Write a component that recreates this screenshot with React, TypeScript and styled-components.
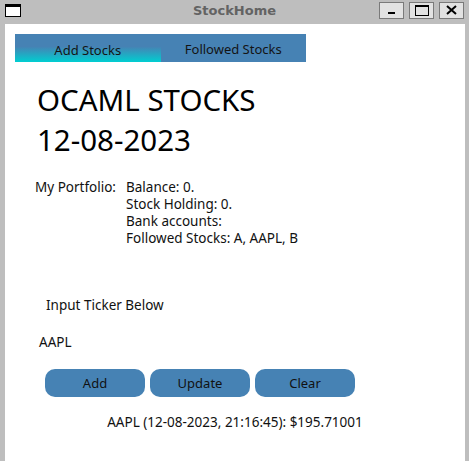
import styled, { createGlobalStyle } from "styled-components";

const Global = createGlobalStyle`
  html, body {
    margin: 0;
    padding: 0;
    background: #bebebe;
  }
  body {
    font-family: "Noto Sans", "DejaVu Sans", sans-serif;
    color: #111;
  }
`;

const Frame = styled.div`
  width: 469px;
  height: 461px;
  background: #bebebe;
  display: flex;
  flex-direction: column;
  overflow: hidden;
`;

const TitleBar = styled.div`
  height: 24px;
  display: flex;
  align-items: center;
  padding: 0 5px;
  box-sizing: border-box;
`;

const AppIcon = styled.div`
  width: 16px;
  height: 13px;
  margin-top: -3px;
  box-sizing: border-box;
  border: 1px solid #000;
  border-top-width: 3px;
  background: #fff;
`;

const WindowTitle = styled.div`
  flex: 1;
  text-align: center;
  font-family: "DejaVu Sans", sans-serif;
  font-weight: bold;
  font-size: 13px;
  color: #636363;
  margin-top: -4px;
  padding-left: 69px;
`;

const Controls = styled.div`
  display: flex;
  gap: 5px;
  margin-top: -4px;
`;

const CtrlButton = styled.div`
  width: 25px;
  height: 17px;
  box-sizing: border-box;
  background: #e2e2e2;
  border: 1px solid #7a7a7a;
  display: flex;
  align-items: center;
  justify-content: center;
`;

const Client = styled.div`
  flex: 1;
  margin: 0 4px 0 5px;
  background: #fff;
  display: flex;
  flex-direction: column;
  padding: 10px 0 0 10px;
`;

const Tabs = styled.div`
  display: flex;
  width: 291px;
  height: 28px;
  background: #4682b4;
`;

const Tab = styled.div<{ $active?: boolean }>`
  flex: 1;
  display: flex;
  align-items: center;
  justify-content: center;
  font-size: 13px;
  color: #141414;
  padding-top: ${(p) => (p.$active ? "3px" : "1px")};
  box-sizing: border-box;
  background: ${(p) =>
    p.$active
      ? "linear-gradient(to bottom, #4682b4 0%, #4682b4 45%, #00ced1 100%)"
      : "#4682b4"};
`;

const Heading = styled.div`
  margin: 18px 0 0 22px;
  font-size: 29.5px;
  line-height: 40px;
  color: #000;
`;

const Portfolio = styled.div`
  display: flex;
  margin: 19px 0 0 20px;
  font-size: 13.5px;
  line-height: 17px;
`;

const PortLabel = styled.div`
  width: 91px;
`;

const PortLines = styled.div`
  display: flex;
  flex-direction: column;
  span {
    line-height: 17px;
  }
`;

const Prompt = styled.div`
  margin: 50px 0 0 31px;
  font-size: 13.5px;
  line-height: 17px;
`;

const Ticker = styled.div`
  margin: 20px 0 0 24px;
  font-size: 13.5px;
  line-height: 17px;
`;

const ButtonRow = styled.div`
  display: flex;
  gap: 5px;
  margin: 18px 0 0 30px;
`;

const Button = styled.button`
  width: 100px;
  height: 28px;
  border: none;
  border-radius: 10px;
  background: #4682b4;
  color: #111;
  font-family: "Noto Sans", sans-serif;
  font-size: 13px;
  padding: 0;
`;

const Result = styled.div`
  margin: 17px 0 0 -10px;
  text-align: center;
  font-size: 13.5px;
  line-height: 17px;
`;

export default function App() {
  return (
    <Frame>
      <Global />
      <TitleBar>
        <AppIcon />
        <WindowTitle>StockHome</WindowTitle>
        <Controls>
          <CtrlButton>
            <svg width="10" height="10" viewBox="0 0 10 10">
              <rect x="1" y="7" width="7" height="2" fill="#000" />
            </svg>
          </CtrlButton>
          <CtrlButton>
            <svg width="14" height="11" viewBox="0 0 14 11">
              <rect x="0.5" y="0.5" width="13" height="10" fill="none" stroke="#000" />
              <rect x="0" y="0" width="14" height="2" fill="#000" />
            </svg>
          </CtrlButton>
          <CtrlButton>
            <svg width="11" height="10" viewBox="0 0 11 10">
              <path d="M1 1 L10 9 M10 1 L1 9" stroke="#000" strokeWidth="2" />
            </svg>
          </CtrlButton>
        </Controls>
      </TitleBar>
      <Client>
        <Tabs>
          <Tab $active>Add Stocks</Tab>
          <Tab>Followed Stocks</Tab>
        </Tabs>
        <Heading>
          OCAML STOCKS
          <br />
          12-08-2023
        </Heading>
        <Portfolio>
          <PortLabel>My Portfolio:</PortLabel>
          <PortLines>
            <span>Balance: 0.</span>
            <span>Stock Holding: 0.</span>
            <span>Bank accounts:</span>
            <span>Followed Stocks: A, AAPL, B</span>
          </PortLines>
        </Portfolio>
        <Prompt>Input Ticker Below</Prompt>
        <Ticker>AAPL</Ticker>
        <ButtonRow>
          <Button>Add</Button>
          <Button>Update</Button>
          <Button>Clear</Button>
        </ButtonRow>
        <Result>AAPL (12-08-2023, 21:16:45): $195.71001</Result>
      </Client>
    </Frame>
  );
}
